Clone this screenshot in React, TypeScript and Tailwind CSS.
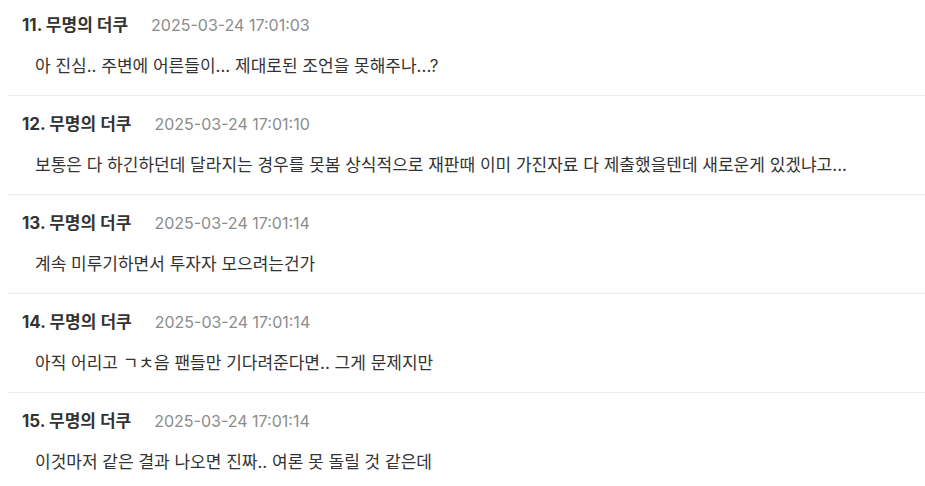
const comments = [
  {
    no: 11,
    time: '2025-03-24 17:01:03',
    body: '아 진심.. 주변에 어른들이... 제대로된 조언을 못해주나...?',
  },
  {
    no: 12,
    time: '2025-03-24 17:01:10',
    body: '보통은 다 하긴하던데 달라지는 경우를 못봄 상식적으로 재판때 이미 가진자료 다 제출했을텐데 새로운게 있겠냐고...',
  },
  { no: 13, time: '2025-03-24 17:01:14', body: '계속 미루기하면서 투자자 모으려는건가' },
  { no: 14, time: '2025-03-24 17:01:14', body: '아직 어리고 ㄱㅊ음 팬들만 기다려준다면.. 그게 문제지만' },
  { no: 15, time: '2025-03-24 17:01:14', body: '이것마저 같은 결과 나오면 진짜.. 여론 못 돌릴 것 같은데' },
];

export default function App() {
  return (
    <div
      className="h-[486px] w-[925px] overflow-hidden bg-white pl-2"
      style={{ fontFamily: 'Inter, "Noto Sans CJK KR", sans-serif' }}
    >
      {comments.map((c, i) => (
        <div
          key={c.no}
          className={`border-b border-[#ebebeb] pb-[17px] ${i === 0 ? 'pt-[14px]' : 'pt-[17px]'}`}
        >
          <div className="flex items-center pl-[14px] leading-[22px]">
            <span className="text-[17px] font-bold text-[#333333]">
              {c.no}. 무명의 더쿠
            </span>
            <span className="ml-[23px] text-[16px] text-[#8c8c8c]">{c.time}</span>
          </div>
          <p className="mt-[18px] pl-[27px] text-[17px] leading-[24px] text-[#333333]">{c.body}</p>
        </div>
      ))}
    </div>
  );
}
